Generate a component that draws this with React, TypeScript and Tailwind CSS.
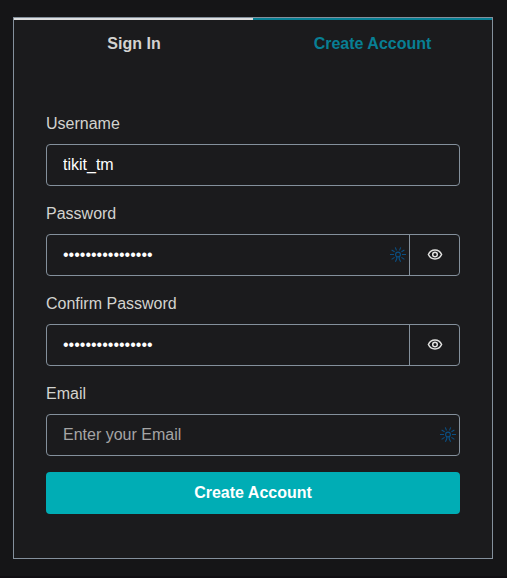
import React from "react";

function Spark() {
  return (
    <svg className="h-4 w-4 shrink-0" viewBox="0 0 16 16" fill="none" stroke="#0b4f82" strokeWidth="1.1">
      <circle cx="8" cy="7.5" r="2.4" />
      <path d="M0 7.5h4M12 7.5h4M5.3 .4l1.2 3M10.7 .4l-1.2 3M1.6 3l3 1.8M14.4 3l-3 1.8M1.6 12.4l3-2M14.4 12.4l-3-2M6.8 9.6v2.2l-1.4 3M9.2 9.6v2.2l1.4 3" />
    </svg>
  );
}

function Eye() {
  return (
    <svg className="h-4 w-4" viewBox="0 0 16 16" fill="none" stroke="#e2e2e0" strokeWidth="1.5">
      <path d="M1.4 7.5C2.7 4.6 5.1 3.1 8 3.1S13.3 4.6 14.6 7.5C13.3 10.4 10.9 11.9 8 11.9S2.7 10.4 1.4 7.5Z" />
      <circle cx="8" cy="7.5" r="2.3" />
    </svg>
  );
}

type FieldProps = {
  label: string;
  type?: string;
  value?: string;
  placeholder?: string;
  spark?: boolean;
  eye?: boolean;
};

function Field({ label, type = "text", value, placeholder, spark, eye }: FieldProps) {
  return (
    <label className="mb-4 block">
      <span className="mb-2 block h-6 leading-6 text-[#d3d3cf]">{label}</span>
      <span className="flex h-[42px] overflow-hidden rounded-[4px] border border-[#84909c]">
        <span className="flex min-w-0 flex-1 items-center pr-[3px]">
          <input
            type={type}
            defaultValue={value}
            placeholder={placeholder}
            className="h-full min-w-0 flex-1 bg-transparent pl-4 text-white outline-none placeholder:text-[#a5a5a5]"
          />
          {spark && <Spark />}
        </span>
        {eye && (
          <button type="button" className="flex w-[50px] items-center justify-center border-l border-[#84909c]">
            <Eye />
          </button>
        )}
      </span>
    </label>
  );
}

export default function App() {
  return (
    <div className="h-[578px] w-[507px] border-b-2 border-[#100e12] bg-[#151517] pt-[17px] pl-[13px] font-['Liberation_Sans',Arial,sans-serif] text-base">
      <div className="h-[542px] w-[480px] border border-[#84909c] bg-[#1b1b1d]">
        <div className="grid grid-cols-2 text-center font-bold leading-6">
          <button className="h-[52px] border-t-2 border-[#dcdedf] pb-[3px] pl-px text-[#d3d3d1]">Sign In</button>
          <button className="h-[52px] border-t-2 border-[#087f94] pb-[3px] text-[#087f94]">Create Account</button>
        </div>
        <form className="px-8 pt-[42px]">
          <Field label="Username" value="tikit_tm" />
          <Field label="Password" type="password" value="abcdefghijklmnop" spark eye />
          <Field label="Confirm Password" type="password" value="abcdefghijklmnop" eye />
          <Field label="Email" placeholder="Enter your Email" spark />
          <button type="button" className="h-[42px] w-full rounded-[4px] bg-[#00adb5] font-bold text-white">
            Create Account
          </button>
        </form>
      </div>
    </div>
  );
}
